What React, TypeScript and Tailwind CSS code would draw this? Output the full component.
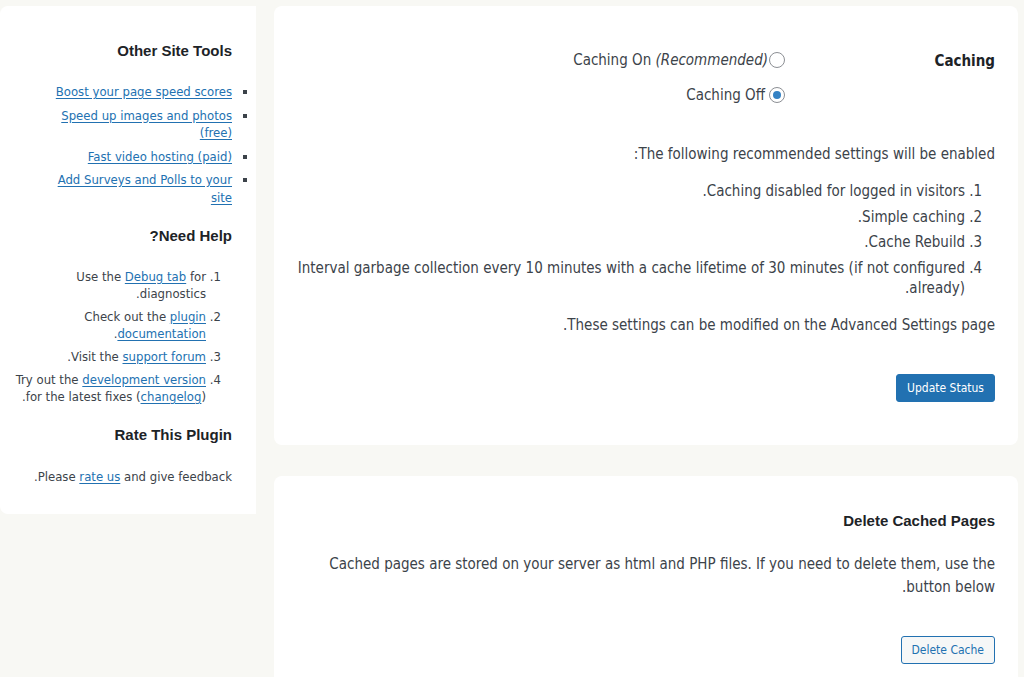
import React from "react";

const body = { fontFamily: '"DejaVu Sans Condensed", "DejaVu Sans", sans-serif' };
const head = { fontFamily: '"Liberation Sans", Arial, sans-serif' };

function Link({ children }: { children: React.ReactNode }) {
  return <a href="#" className="text-[#2271b1] underline underline-offset-2">{children}</a>;
}

function Radio({ checked }: { checked?: boolean }) {
  return (
    <span className="inline-flex items-center justify-center w-[16px] h-[16px] rounded-full border border-[#8c8f94] bg-white shrink-0">
      {checked && <span className="w-[8px] h-[8px] rounded-full bg-[#3582c4]" />}
    </span>
  );
}

export default function App() {
  return (
    <div dir="rtl" className="min-h-[677px] bg-[#f8f8f4] text-[#3c434a] overflow-hidden" style={body}>
      <div className="flex items-start gap-[18px] pt-[6px] pr-[6px]">
        {/* Main column */}
        <div className="flex-1 flex flex-col gap-[31px]">
          <div className="bg-white rounded-lg px-[23px] pt-[44px] pb-[43px] h-[439px]">
            <div className="flex">
              <div className="w-[210px] text-[15px] leading-[22px] font-bold text-[#1d2327]">Caching</div>
              <div className="flex flex-col gap-[15px] text-[15px] leading-[20px]">
                <label className="flex items-center gap-[1px]">
                  <Radio />
                  <span>Caching On <em>(Recommended)</em></span>
                </label>
                <label className="flex items-center gap-[4px]">
                  <Radio checked />
                  <span>Caching Off</span>
                </label>
              </div>
            </div>
            <p className="mt-[39px] text-[15px] leading-[20px]">The following recommended settings will be enabled:</p>
            <ol className="list-decimal mr-[30px] mt-[17px] text-[15px] leading-[20px] flex flex-col gap-[5.5px]">
              <li>Caching disabled for logged in visitors.</li>
              <li>Simple caching.</li>
              <li>Cache Rebuild.</li>
              <li>Interval garbage collection every 10 minutes with a cache lifetime of 30 minutes (if not configured already).</li>
            </ol>
            <p className="mt-[17px] text-[15px] leading-[20px]">These settings can be modified on the Advanced Settings page.</p>
            <div className="mt-[39px]">
              <button className="h-[28px] px-[10px] rounded-[3px] bg-[#2271b1] border border-[#2271b1] text-white text-[12px]" style={body}>
                Update Status
              </button>
            </div>
          </div>

          <div className="bg-white rounded-lg px-[23px] pt-[35px] pb-[40px]">
            <h3 className="text-[15px] leading-[20px] font-bold text-[#1d2327]" style={head}>Delete Cached Pages</h3>
            <p className="mt-[22px] text-[15px] leading-[23px]">
              Cached pages are stored on your server as html and PHP files. If you need to delete them, use the button below.
            </p>
            <div className="mt-[37px]">
              <button className="h-[28px] px-[10px] rounded-[3px] bg-[#f6f7f7] border border-[#2271b1] text-[#2271b1] text-[12px]" style={body}>
                Delete Cache
              </button>
            </div>
          </div>
        </div>

        {/* Sidebar */}
        <div className="w-[256px] shrink-0 bg-white rounded-l-lg pr-[24px] pl-[8px] pt-[35px] h-[508px] text-[13px]">
          <h3 className="text-[15px] leading-[20px] font-bold text-[#1d2327]" style={head}>Other Site Tools</h3>
          <ul className="list-[square] ml-[40px] mt-[22px] text-[13px] leading-[17.5px] flex flex-col gap-[6px]">
            <li><Link>Boost your page speed scores</Link></li>
            <li><Link>Speed up images and photos (free)</Link></li>
            <li><Link>Fast video hosting (paid)</Link></li>
            <li><Link>Add Surveys and Polls to your site</Link></li>
          </ul>
          <h3 className="mt-[20px] text-[15px] leading-[20px] font-bold text-[#1d2327]" style={head}>Need Help?</h3>
          <ol className="list-decimal mr-[26px] mt-[22px] text-[13px] leading-[17px] flex flex-col gap-[6px]">
            <li>Use the <Link>Debug tab</Link> for diagnostics.</li>
            <li>Check out the <Link>plugin documentation</Link>.</li>
            <li>Visit the <Link>support forum</Link>.</li>
            <li>Try out the <Link>development version</Link> for the latest fixes (<Link>changelog</Link>).</li>
          </ol>
          <h3 className="mt-[20px] text-[15px] leading-[20px] font-bold text-[#1d2327]" style={head}>Rate This Plugin</h3>
          <p className="mt-[23px] text-[13px] leading-[17px]">Please <Link>rate us</Link> and give feedback.</p>
        </div>
      </div>
    </div>
  );
}
